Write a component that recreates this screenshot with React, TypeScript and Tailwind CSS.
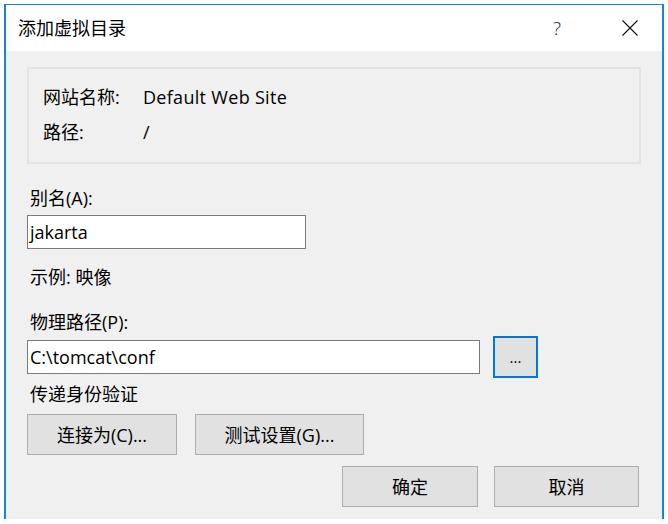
const font = {
  fontFamily: '"Open Sans", "Noto Sans CJK SC", sans-serif',
};

const Btn = ({ label, className }: { label: string; className: string }) => (
  <button
    className={`h-[41px] border border-[#adadad] bg-[#e1e1e1] text-[18px] leading-none text-black ${className}`}
  >
    {label}
  </button>
);

export default function App() {
  return (
    <div className="w-[668px] h-[524px] bg-white overflow-hidden" style={font}>
      <div className="ml-[4px] mt-[4px] w-[660px] h-[515px] border-l-2 border-r-2 border-t border-[#1883d7] flex flex-col">
        {/* Title bar */}
        <div className="h-[46px] bg-white flex items-center pl-[12px] shrink-0">
          <span className="text-[18px] text-black">添加虚拟目录</span>
          <span className="ml-auto text-[19px] font-light text-[#222] w-[20px] text-center">?</span>
          <svg className="ml-[55px] mr-[24px]" width="16" height="16" viewBox="0 0 16 16">
            <path d="M0.5 0.5 L15.5 15.5 M15.5 0.5 L0.5 15.5" stroke="#111" strokeWidth="1.1" fill="none" />
          </svg>
        </div>

        {/* Body */}
        <div className="flex-1 bg-[#f0f0f0] px-[21px] pt-[16px] text-[18px] text-black">
          <div className="h-[97px] border-2 border-[#e3e3e3] pl-[14px] pt-[16px]">
            <div className="flex h-[24px] items-center">
              <span className="w-[100px]">网站名称:</span>
              <span className="tracking-[0.3px]">Default Web Site</span>
            </div>
            <div className="flex h-[24px] items-center mt-[11px]">
              <span className="w-[100px]">路径:</span>
              <span>/</span>
            </div>
          </div>

          <div className="mt-[22px] pl-[3px] h-[24px] leading-[24px]">别名(A):</div>
          <div className="mt-[5px] w-[279px] h-[34px] border border-[#7a7a7a] bg-white pl-[2px] flex items-center">
            jakarta
          </div>

          <div className="mt-[16px] pl-[3px] h-[24px] leading-[24px]">示例: 映像</div>

          <div className="mt-[21px] pl-[3px] h-[24px] leading-[24px]">物理路径(P):</div>
          <div className="mt-[2px] h-[42px] flex items-center">
            <div className="w-[453px] h-[34px] border border-[#7a7a7a] bg-white pl-[2px] flex items-center">
              C:\tomcat\conf
            </div>
            <button className="ml-[13px] w-[45px] h-[42px] border-2 border-[#0078d7] bg-[#e1e1e1] text-[15px] leading-none">
              ...
            </button>
          </div>

          <div className="mt-[4px] pl-[3px] h-[24px] leading-[24px]">传递身份验证</div>
          <div className="mt-[8px] flex">
            <Btn label="连接为(C)..." className="w-[150px]" />
            <Btn label="测试设置(G)..." className="ml-[18px] w-[169px]" />
          </div>

          <div className="mt-[11px] flex justify-end mr-[2px]">
            <Btn label="确定" className="w-[136px]" />
            <Btn label="取消" className="ml-[16px] w-[145px]" />
          </div>
        </div>
      </div>
    </div>
  );
}
